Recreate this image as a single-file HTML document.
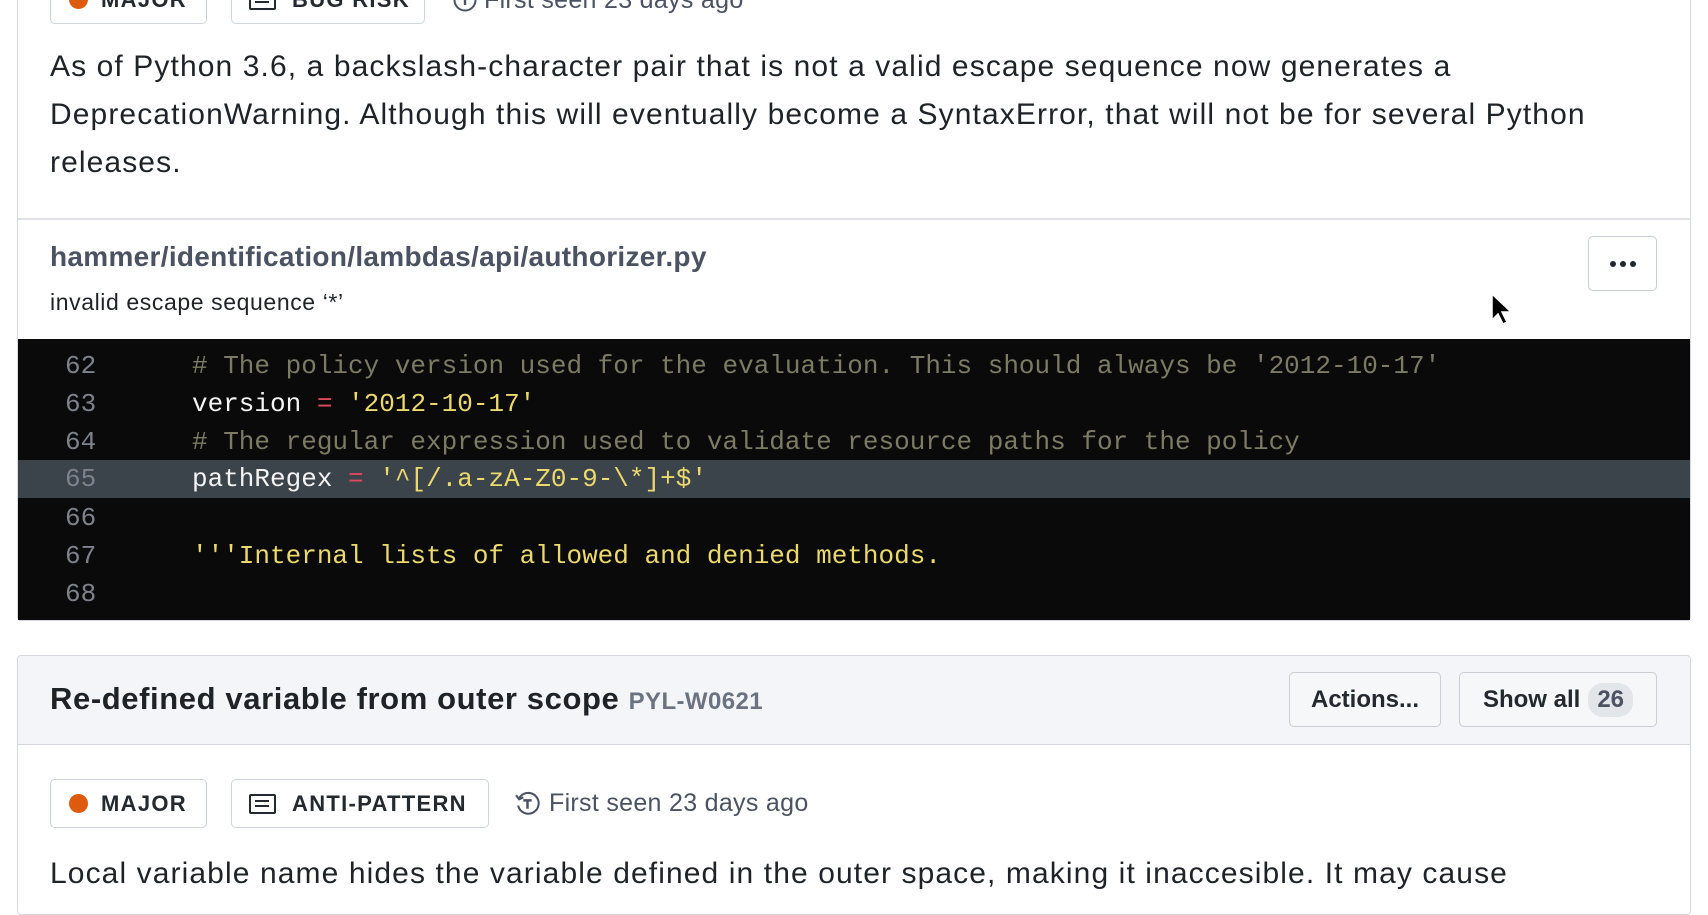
<!DOCTYPE html>
<html><head><meta charset="utf-8"><style>
*{margin:0;padding:0;box-sizing:border-box}
body{width:1708px;height:874px;overflow:hidden;background:#fff;font-family:"Liberation Sans",sans-serif;color:#1f2328;position:relative}
.abs{position:absolute}
.card1{left:17px;top:-30px;width:1674px;height:651px;border:1.5px solid #d5d8de;border-radius:4px}
.card2{left:17px;top:655px;width:1674px;height:260px;border:1.5px solid #d5d8de;border-radius:4px;overflow:hidden}
.tag{position:absolute;height:49px;border:1.5px solid #cfd3da;border-radius:5px;display:flex;align-items:center;font-weight:bold;font-size:22px;letter-spacing:1.3px;color:#24292f;background:#fff}
.dot{width:19px;height:19px;border-radius:50%;background:#dd5a0e;margin:0 13px 0 18px}
.doc{width:27px;height:20px;border:2.5px solid #24292f;border-radius:2px;margin:0 16px 0 17px;position:relative}
.doc:before{content:"";position:absolute;left:4px;top:4px;width:14px;height:2.5px;background:#24292f;box-shadow:0 5px 0 #24292f}
.seen{position:absolute;font-size:25px;letter-spacing:.3px;color:#4b5262;display:flex;align-items:center}
.p{font-size:30px;letter-spacing:1.1px;line-height:48px;color:#1f2328}
.code{left:18px;top:339px;width:1672px;height:281px;background:#0a0a0a;font-family:"Liberation Mono",monospace;font-size:26px}
.ln{position:absolute;left:0;width:1672px;height:38px;line-height:38px;white-space:pre}
.ln .n{position:absolute;left:47px;color:#7d828c}
.ln .c{position:absolute;left:174px}
.cm{color:#7c7b63}.s{color:#ebd96e}.op{color:#e2475c}.w{color:#f3f3f3}
.btn{position:absolute;height:55px;border:1.5px solid #c9cdd4;border-radius:5px;background:#f6f7f9;font-size:24px;font-weight:bold;color:#24292f;display:flex;align-items:center;justify-content:center}
</style></head><body>
<div class="abs card1"></div>
<div class="tag" style="left:50px;top:-25px;width:157px"><span class="dot"></span>MAJOR</div>
<div class="tag" style="left:231px;top:-25px;width:194px"><span class="doc"></span>BUG RISK</div>
<div class="seen" style="left:452px;top:-13px;height:26px"><svg width="26" height="26" viewBox="0 0 26 26" style="margin-right:6px"><circle cx="13" cy="13" r="10.5" fill="none" stroke="#4b5262" stroke-width="2"/><path d="M13 11v7M13 7v1.5" stroke="#4b5262" stroke-width="2.4"/></svg>First seen 23 days ago</div>
<div class="abs p" style="left:50px;top:43px;width:1640px;white-space:nowrap">As of Python 3.6, a backslash-character pair that is not a valid escape sequence now generates a<br>DeprecationWarning. Although this will eventually become a SyntaxError, that will not be for several Python<br>releases.</div>
<div class="abs" style="left:18px;top:218px;width:1672px;height:1.5px;background:#dfe1e6"></div>
<div class="abs" style="left:50px;top:241px;font-size:28px;letter-spacing:.3px;font-weight:bold;color:#4b5262">hammer/identification/lambdas/api/authorizer.py</div>
<div class="abs" style="left:50px;top:289px;font-size:23px;letter-spacing:.6px;color:#1f2328">invalid escape sequence ‘*’</div>
<div class="btn" style="left:1588px;top:236px;width:69px;background:#fff;font-size:28px;line-height:1"><svg width="28" height="8"><circle cx="4" cy="4" r="3" fill="#24292f"/><circle cx="14" cy="4" r="3" fill="#24292f"/><circle cx="24" cy="4" r="3" fill="#24292f"/></svg></div>
<div class="abs code">
<div class="ln" style="top:8px"><span class="n">62</span><span class="c cm"># The policy version used for the evaluation. This should always be '2012-10-17'</span></div>
<div class="ln" style="top:46px"><span class="n">63</span><span class="c"><span class="w">version</span> <span class="op">=</span> <span class="s">'2012-10-17'</span></span></div>
<div class="ln" style="top:84px"><span class="n">64</span><span class="c cm"># The regular expression used to validate resource paths for the policy</span></div>
<div class="ln" style="top:121px;background:#3b434b"><span class="n">65</span><span class="c"><span class="w">pathRegex</span> <span class="op">=</span> <span class="s">'^[/.a-zA-Z0-9-\*]+$'</span></span></div>
<div class="ln" style="top:160px"><span class="n">66</span></div>
<div class="ln" style="top:198px"><span class="n">67</span><span class="c s">'''Internal lists of allowed and denied methods.</span></div>
<div class="ln" style="top:236px"><span class="n">68</span></div>
</div>
<svg class="abs" style="left:1490px;top:292px" width="24" height="34" viewBox="0 0 24 34"><path d="M2 2v26l6-6 5 10 4-2-5-10h9z" fill="#000" stroke="#fff" stroke-width="1.5"/></svg>
<div class="abs card2">
<div style="position:absolute;left:0;top:0;width:100%;height:89px;background:#f3f5f9;border-bottom:1.5px solid #d5d8de"></div>
</div>
<div class="abs" style="left:50px;top:681px;font-size:31px;letter-spacing:.6px;font-weight:bold;color:#1f2328;white-space:nowrap">Re-defined variable from outer scope <span style="font-size:24px;letter-spacing:.4px;color:#6b7280">PYL-W0621</span></div>
<div class="btn" style="left:1289px;top:672px;width:152px">Actions...</div>
<div class="btn" style="left:1459px;top:672px;width:198px">Show all<span style="margin-left:8px;background:#e2e5ea;border-radius:15px;padding:3px 9px;color:#4b5262">26</span></div>
<div class="tag" style="left:50px;top:779px;width:157px"><span class="dot"></span>MAJOR</div>
<div class="tag" style="left:231px;top:779px;width:258px"><span class="doc"></span>ANTI-PATTERN</div>
<div class="seen" style="left:514px;top:790px;height:26px"><svg width="27" height="27" viewBox="0 0 26 26" style="margin-right:8px"><path d="M5 8A10 10 0 1 1 4 15" fill="none" stroke="#4b5262" stroke-width="2"/><path d="M2 5l3 4 4-2" fill="none" stroke="#4b5262" stroke-width="2"/><path d="M9 10h8M13 10v8" stroke="#4b5262" stroke-width="2.4"/></svg>First seen 23 days ago</div>
<div class="abs p" style="left:50px;top:850px;white-space:nowrap">Local variable name hides the variable defined in the outer space, making it inaccesible. It may cause</div>
</body></html>
